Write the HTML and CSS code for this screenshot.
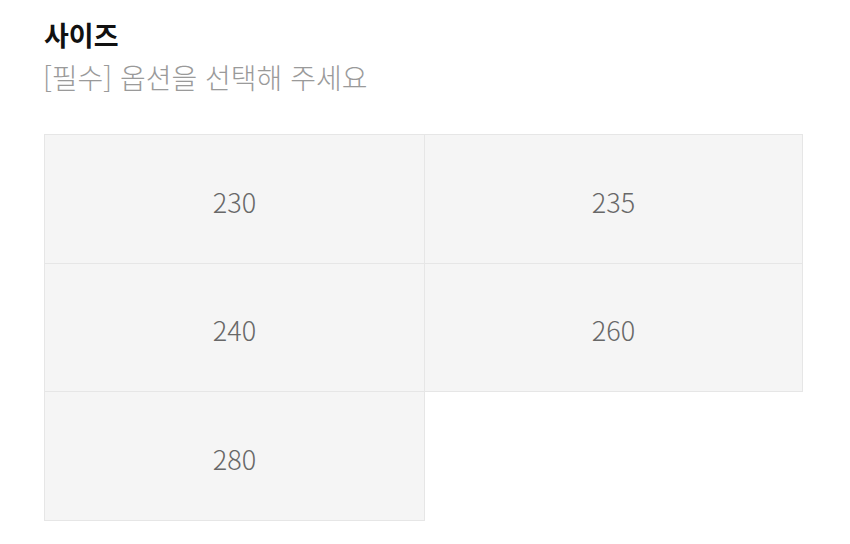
FILE: index.html
```html
<!DOCTYPE html>
<html lang="ko">
<head>
<meta charset="utf-8">
<link rel="stylesheet" href="styles.css">
</head>
<body>
<section class="option">
  <h2 class="option-title">사이즈</h2>
  <p class="option-sub">[필수] 옵션을 선택해 주세요</p>
  <div class="size-grid">
    <button class="size-cell">230</button>
    <button class="size-cell">235</button>
    <button class="size-cell">240</button>
    <button class="size-cell">260</button>
    <button class="size-cell">280</button>
  </div>
</section>
</body>
</html>
```
FILE: styles.css
```css
html, body {
  margin: 0;
  padding: 0;
  background: #ffffff;
}
body {
  font-family: "Noto Sans CJK KR", "Noto Sans", sans-serif;
}
.option {
  padding: 16px 0 0 44px;
}
.option-title {
  margin: 0;
  font-size: 27px;
  font-weight: 700;
  line-height: 38px;
  color: #111111;
}
.option-sub {
  margin: 4px 0 0 -1px;
  font-size: 28px;
  font-weight: 300;
  line-height: 38px;
  color: #9a9a9a;
}
.size-grid {
  margin-top: 38px;
  display: grid;
  grid-template-columns: 380px 378px;
  grid-auto-rows: 128.5px;
  padding: 0 1px 1px 0;
  width: max-content;
}
.size-cell {
  font-family: inherit;
  background: #f5f5f5;
  border: 1px solid #e6e6e6;
  margin: 0 -1px -1px 0;
  font-size: 27px;
  font-weight: 300;
  color: #686868;
  padding: 5px 0 0 0;
  display: flex;
  align-items: center;
  justify-content: center;
}
```
